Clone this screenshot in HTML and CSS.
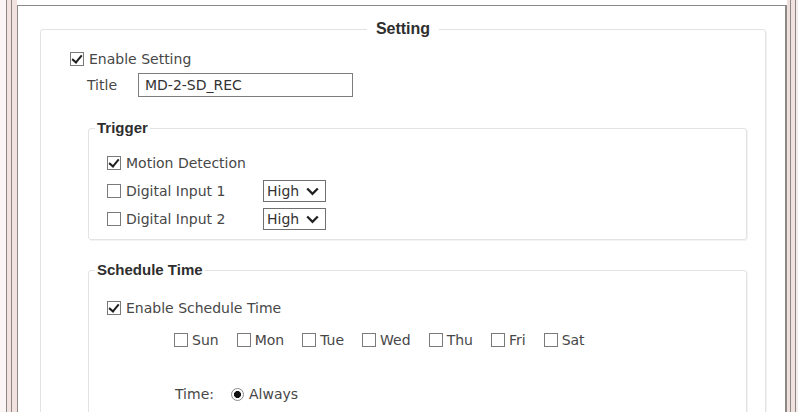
FILE: index.html
```html
<!DOCTYPE html>
<html lang="en">
<head>
  <meta charset="UTF-8">
  <meta name="viewport" content="width=device-width, initial-scale=1.0">
  <title>Setting</title>
  <link rel="stylesheet" href="styles.css">
</head>
<body>

<div class="page">
  <div class="rail rail-left"></div>

  <div class="panel">
    <fieldset class="setting">
      <legend>Setting</legend>

      <div class="setting-body">
        <div class="row enable-row">
          <label class="check"><input type="checkbox" checked>Enable Setting</label>
        </div>

        <div class="row title-row">
          <span class="title-label">Title</span>
          <input type="text" class="title-input" value="MD-2-SD_REC">
        </div>
      </div>

      <!-- Disparadores -->
      <fieldset class="group trigger">
        <legend>Trigger</legend>
        <div class="group-body">
          <div class="row">
            <label class="check"><input type="checkbox" checked>Motion Detection</label>
          </div>
          <div class="row">
            <label class="check io"><input type="checkbox">Digital Input 1</label>
            <span class="select">
              <select><option>High</option><option>Low</option></select>
              <svg width="13" height="9" viewBox="0 0 13 9"><polyline points="1.2,1.5 6.5,6.8 11.8,1.5" fill="none" stroke="#222" stroke-width="2.3"/></svg>
            </span>
          </div>
          <div class="row">
            <label class="check io"><input type="checkbox">Digital Input 2</label>
            <span class="select">
              <select><option>High</option><option>Low</option></select>
              <svg width="13" height="9" viewBox="0 0 13 9"><polyline points="1.2,1.5 6.5,6.8 11.8,1.5" fill="none" stroke="#222" stroke-width="2.3"/></svg>
            </span>
          </div>
        </div>
      </fieldset>

      <!-- Horario -->
      <fieldset class="group schedule">
        <legend>Schedule Time</legend>
        <div class="group-body">
          <div class="row">
            <label class="check"><input type="checkbox" checked>Enable Schedule Time</label>
          </div>
          <div class="row days">
            <label class="check"><input type="checkbox">Sun</label>
            <label class="check"><input type="checkbox">Mon</label>
            <label class="check"><input type="checkbox">Tue</label>
            <label class="check"><input type="checkbox">Wed</label>
            <label class="check"><input type="checkbox">Thu</label>
            <label class="check"><input type="checkbox">Fri</label>
            <label class="check"><input type="checkbox">Sat</label>
          </div>
          <div class="row time-row">
            <span class="time-label">Time:</span>
            <label class="check"><input type="radio" name="time" checked>Always</label>
          </div>
        </div>
      </fieldset>
    </fieldset>
  </div>

  <div class="rail rail-right"></div>
</div>

</body>
</html>
```

FILE: styles.css
```css
html, body {
  height: 100%;
  overflow: hidden;
}
body {
  margin: 0;
  background: #fff;
  font-family: "DejaVu Sans", Verdana, sans-serif;
  font-size: 14px;
  color: #474747;
}
.page {
  display: flex;
  height: 100%;
}
/* Marco exterior con lineas dobles */
.rail {
  flex: none;
}
.rail-left {
  width: 17px;
  background: linear-gradient(to right,
    #fbf6f5 0, #fbf6f5 6px,
    #8b8885 6px, #8b8885 7px,
    #f1e2e0 7px, #f1e2e0 11px,
    #8b8885 11px, #8b8885 12px,
    #f1e2e0 12px, #f1e2e0 17px);
}
.rail-right {
  width: 11px;
  background: linear-gradient(to right,
    #efe0de 0, #efe0de 3px,
    #8b8885 3px, #8b8885 4px,
    #f1e2e0 4px, #f1e2e0 8px,
    #8b8885 8px, #8b8885 9px,
    #f6ebea 9px, #f6ebea 11px);
}
.panel {
  flex: 1;
  margin-top: 5px;
  border-top: 1px solid #8b8885;
  border-left: 1px solid #8b8885;
  border-right: 2px solid #8b8885;
  background: #fff;
}
fieldset {
  border: 1px solid #e3e3e3;
  border-radius: 3px;
  box-shadow: 1px 1px 0 #f3f3f3;
  min-width: 0;
}
legend {
  font-family: "Liberation Sans", Arial, sans-serif;
  font-weight: bold;
  color: #2e2e2e;
  line-height: 18px;
  padding: 0 2px;
}
.setting {
  margin: 14px 19px 0 22px;
  padding: 9px 18px 0 18px;
}
.setting > legend {
  font-size: 16px;
  margin: 0 auto;
  padding: 0 9px;
}
.setting-body {
  padding-left: 11px;
}
.group {
  margin: 22px 0 0 29px;
  padding: 12px 0 6px 6px;
}
.group > legend {
  font-size: 15px;
}
.group-body {
  padding-left: 12px;
}
.schedule {
  margin-top: 21px;
  padding-top: 15px;
  padding-bottom: 40px;
}
.row {
  display: flex;
  align-items: center;
  height: 28px;
}
.enable-row {
  height: 24px;
}
.title-row {
  height: 24px;
  margin-top: 2px;
  margin-left: 17px;
}
.title-label {
  width: 51px;
}
.title-input {
  width: 215px;
  height: 24px;
  box-sizing: border-box;
  border: 1px solid #7d7d7d;
  padding: 0 6px;
  font-family: inherit;
  font-size: 14px;
  color: #333;
}
/* Casillas y radios dibujados a mano */
.check {
  display: inline-flex;
  align-items: center;
}
input[type="checkbox"],
input[type="radio"] {
  appearance: none;
  -webkit-appearance: none;
  flex: none;
  position: relative;
  width: 14px;
  height: 14px;
  margin: 0 5px 0 0;
  border: 1px solid #7a7a7a;
  background: #fff;
}
input[type="checkbox"]:checked::after {
  content: "";
  position: absolute;
  left: 3px;
  top: 0;
  width: 4px;
  height: 8px;
  border: solid #1e1e1e;
  border-width: 0 2.5px 2.5px 0;
  transform: rotate(40deg);
}
input[type="radio"] {
  width: 13px;
  height: 13px;
  border-radius: 50%;
  border-color: #8a8a8a;
}
input[type="radio"]:checked {
  background: radial-gradient(circle, #111 0, #111 3.2px, #fff 3.8px);
}
.io {
  width: 156px;
}
.select {
  position: relative;
  display: inline-block;
}
.select select {
  appearance: none;
  -webkit-appearance: none;
  width: 63px;
  height: 22px;
  box-sizing: border-box;
  border: 1px solid #707070;
  border-radius: 0;
  padding: 0 0 0 3px;
  background: #fff;
  font-family: inherit;
  font-size: 14px;
  color: #333;
}
.select svg {
  position: absolute;
  right: 7px;
  top: 7px;
  pointer-events: none;
}
.days {
  margin-top: 4px;
  margin-left: 67px;
  gap: 18px;
}
.days input[type="checkbox"] {
  margin-right: 4px;
}
.time-row {
  margin-top: 26px;
  margin-left: 68px;
}
.time-label {
  width: 56px;
}
.time-row input[type="radio"] {
  margin-right: 5px;
}
```
